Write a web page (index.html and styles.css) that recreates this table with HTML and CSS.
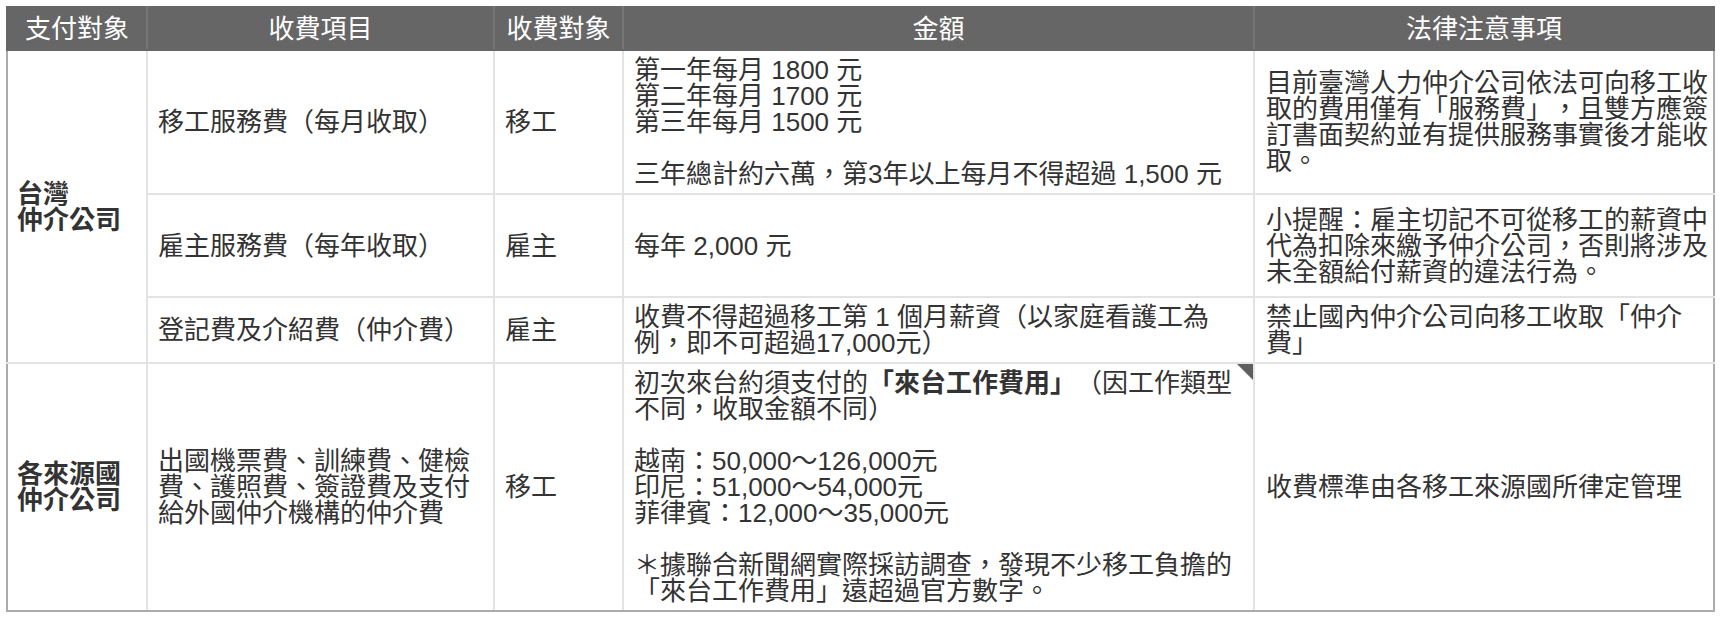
FILE: index.html
```html
<!DOCTYPE html>
<html lang="zh-Hant">
<head>
<meta charset="utf-8">
<title>仲介收費項目</title>
<link rel="stylesheet" href="styles.css">
</head>
<body>
<div class="page">
<table class="fees">
<colgroup>
<col class="c1"><col class="c2"><col class="c3"><col class="c4"><col class="c5">
</colgroup>
<thead>
<tr class="head">
<th class="first">支付對象</th><th>收費項目</th><th>收費對象</th><th>金額</th><th class="last">法律注意事項</th>
</tr>
</thead>
<tbody>
<tr class="r1">
<td rowspan="3" class="payer edge-l">台灣<br>仲介公司</td>
<td>移工服務費（每月收取）</td>
<td>移工</td>
<td class="amount">第一年每月 1800 元<br>第二年每月 1700 元<br>第三年每月 1500 元<br><br>三年總計約六萬，第3年以上每月不得超過 1,500 元</td>
<td class="note edge-r">目前臺灣人力仲介公司依法可向移工收<br>取的費用僅有「服務費」，且雙方應簽<br>訂書面契約並有提供服務事實後才能收<br>取。</td>
</tr>
<tr class="r2">
<td>雇主服務費（每年收取）</td>
<td>雇主</td>
<td class="amount">每年 2,000 元</td>
<td class="note edge-r">小提醒：雇主切記不可從移工的薪資中<br>代為扣除來繳予仲介公司，否則將涉及<br>未全額給付薪資的違法行為。</td>
</tr>
<tr class="r3">
<td>登記費及介紹費（仲介費）</td>
<td>雇主</td>
<td class="amount">收費不得超過移工第 1 個月薪資（以家庭看護工為<br>例，即不可超過17,000元）</td>
<td class="note edge-r">禁止國內仲介公司向移工收取「仲介<br>費」</td>
</tr>
<tr class="r4">
<td class="payer edge-l edge-b">各來源國<br>仲介公司</td>
<td class="edge-b">出國機票費、訓練費、健檢<br>費、護照費、簽證費及支付<br>給外國仲介機構的仲介費</td>
<td class="edge-b">移工</td>
<td class="amount flag edge-b">初次來台約須支付的<b>「來台工作費用」</b>（因工作類型<br>不同，收取金額不同）<br><br>越南：50,000～126,000元<br>印尼：51,000～54,000元<br>菲律賓：12,000～35,000元<br><br>＊據聯合新聞網實際採訪調查，發現不少移工負擔的<br>「來台工作費用」遠超過官方數字。</td>
<td class="note edge-r edge-b">收費標準由各移工來源國所律定管理</td>
</tr>
</tbody>
</table>
</div>
</body>
</html>
```

FILE: styles.css
```css
html, body {
  margin: 0;
  padding: 0;
  background: #ffffff;
}

body {
  font-family: "Liberation Sans", "Noto Sans CJK TC", sans-serif;
  color: #333333;
  text-spacing-trim: space-all;
}

.page {
  padding: 6px 0 0 6px;
}

.fees {
  width: 1707px;
  border-collapse: collapse;
  table-layout: fixed;
  font-size: 26px;
  line-height: 26px;
  text-spacing-trim: space-all;
}

.c1 { width: 140px; }
.c2 { width: 347px; }
.c3 { width: 129px; }
.c4 { width: 631px; }
.c5 { width: 460px; }

.head th {
  height: 41px;
  padding: 0;
  background: #666666;
  color: #ffffff;
  font-weight: normal;
  text-align: center;
  vertical-align: middle;
  border: 2px solid #666666;
  border-left-color: #767676;
  border-right-color: #767676;
}

.head th.first { border-left-color: #666666; }
.head th.last { border-right-color: #666666; }

.fees td {
  border: 2px solid #e3e3e3;
  padding: 6px 10px 6px 10px;
  vertical-align: middle;
  text-align: left;
  white-space: nowrap;
}

.fees td.note {
  padding-left: 11px;
  padding-right: 4px;
}

.fees td.payer {
  font-weight: bold;
  padding-left: 9px;
}

.fees td.edge-l { border-left-color: #ababab; }
.fees td.edge-r { border-right-color: #ababab; }
.fees td.edge-b { border-bottom-color: #ababab; }

.r2 { height: 103px; }

.fees td.flag {
  position: relative;
}

.fees td.flag::after {
  content: "";
  position: absolute;
  top: 0;
  right: 0;
  width: 0;
  height: 0;
  border-style: solid;
  border-width: 0 16px 16px 0;
  border-color: transparent #5e5e5e transparent transparent;
}

.fees b {
  font-weight: bold;
}
```
